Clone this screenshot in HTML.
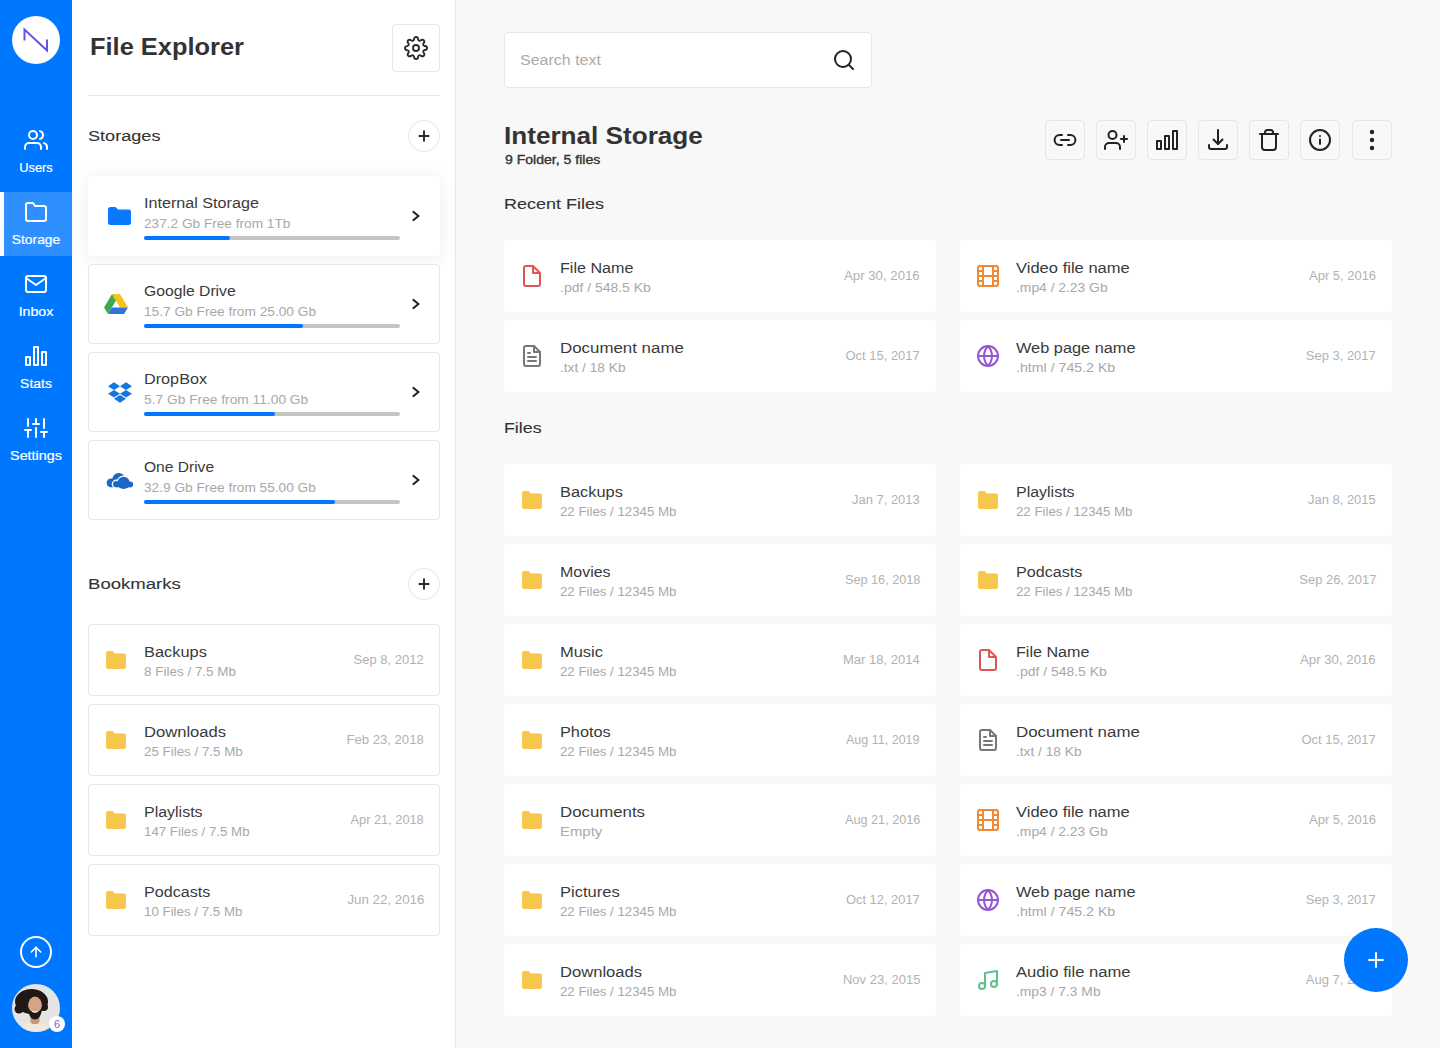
<!DOCTYPE html>
<html><head><meta charset="utf-8"><title>File Explorer</title>
<style>
html,body{margin:0;padding:0;width:1440px;height:1048px;overflow:hidden;background:#F8F8F8;font-family:"Liberation Sans", sans-serif;}
.t{position:absolute;white-space:nowrap;font-family:"Liberation Sans", sans-serif;}
svg{overflow:visible}
</style></head><body>
<div style="position:absolute;left:0px;top:0px;width:72px;height:1048px;box-sizing:border-box;background:#0077FF"></div>
<div style="position:absolute;left:12px;top:16px;width:48px;height:48px;box-sizing:border-box;background:#fff;border-radius:50%"></div>
<svg style="position:absolute;left:12px;top:16px" width="48" height="48" viewBox="0 0 48 48" fill="none" stroke="#6650E6" stroke-width="2" stroke-linejoin="miter" stroke-miterlimit="10"><polyline points="12.5 24.5 12.5 13.5 35 34.5 35 23.5"/></svg>
<svg style="position:absolute;left:24px;top:128px" width="24" height="24" viewBox="0 0 24 24" fill="none" stroke="#fff" stroke-width="2" stroke-linecap="round" stroke-linejoin="round"><path d="M17 21v-2a4 4 0 0 0-4-4H5a4 4 0 0 0-4 4v2"/><circle cx="9" cy="7" r="4"/><path d="M23 21v-2a4 4 0 0 0-3-3.87"/><path d="M16 3.13a4 4 0 0 1 0 7.75"/></svg>
<div id="T0" class="t" style="left:-64px;width:200px;text-align:center;transform-origin:100px 0;top:161.84px;font-size:12px;line-height:12px;color:#fff;font-weight:400;transform:scaleX(1.0645);-webkit-text-stroke:0.2px #fff;">Users</div>
<div style="position:absolute;left:0px;top:192px;width:72px;height:64px;box-sizing:border-box;background:rgba(255,255,255,0.18)"></div>
<div style="position:absolute;left:0px;top:192px;width:4px;height:64px;box-sizing:border-box;background:#fff"></div>
<svg style="position:absolute;left:24px;top:200px" width="24" height="24" viewBox="0 0 24 24" fill="none" stroke="#fff" stroke-width="2" stroke-linecap="round" stroke-linejoin="round"><path d="M22 19a2 2 0 0 1-2 2H4a2 2 0 0 1-2-2V5a2 2 0 0 1 2-2h5l2 3h9a2 2 0 0 1 2 2z"/></svg>
<div id="T1" class="t" style="left:-64px;width:200px;text-align:center;transform-origin:100px 0;top:233.84px;font-size:12px;line-height:12px;color:#fff;font-weight:400;transform:scaleX(1.1513);-webkit-text-stroke:0.2px #fff;">Storage</div>
<svg style="position:absolute;left:24px;top:272px" width="24" height="24" viewBox="0 0 24 24" fill="none" stroke="#fff" stroke-width="2" stroke-linecap="round" stroke-linejoin="round"><path d="M4 4h16c1.1 0 2 .9 2 2v12c0 1.1-.9 2-2 2H4c-1.1 0-2-.9-2-2V6c0-1.1.9-2 2-2z"/><polyline points="22,6 12,13 2,6"/></svg>
<div id="T2" class="t" style="left:-64px;width:200px;text-align:center;transform-origin:100px 0;top:305.84px;font-size:12px;line-height:12px;color:#fff;font-weight:400;transform:scaleX(1.1825);-webkit-text-stroke:0.2px #fff;">Inbox</div>
<svg style="position:absolute;left:24px;top:344px" width="24" height="24" viewBox="0 0 24 24" fill="none" stroke="#fff" stroke-width="2" stroke-linecap="round" stroke-linejoin="round"><rect x="2" y="13" width="4" height="8"/><rect x="10" y="3" width="4" height="18"/><rect x="18" y="8" width="4" height="13"/></svg>
<div id="T3" class="t" style="left:-64px;width:200px;text-align:center;transform-origin:100px 0;top:377.84px;font-size:12px;line-height:12px;color:#fff;font-weight:400;transform:scaleX(1.1612);-webkit-text-stroke:0.2px #fff;">Stats</div>
<svg style="position:absolute;left:24px;top:416px" width="24" height="24" viewBox="0 0 24 24" fill="none" stroke="#fff" stroke-width="2" stroke-linecap="round" stroke-linejoin="round"><line x1="4" y1="21" x2="4" y2="14"/><line x1="4" y1="10" x2="4" y2="3"/><line x1="12" y1="21" x2="12" y2="12"/><line x1="12" y1="8" x2="12" y2="3"/><line x1="20" y1="21" x2="20" y2="16"/><line x1="20" y1="12" x2="20" y2="3"/><line x1="1" y1="14" x2="7" y2="14"/><line x1="9" y1="8" x2="15" y2="8"/><line x1="17" y1="16" x2="23" y2="16"/></svg>
<div id="T4" class="t" style="left:-64px;width:200px;text-align:center;transform-origin:100px 0;top:449.84px;font-size:12px;line-height:12px;color:#fff;font-weight:400;transform:scaleX(1.1950);-webkit-text-stroke:0.2px #fff;">Settings</div>
<div style="position:absolute;left:20px;top:936px;width:32px;height:32px;box-sizing:border-box;border:2px solid #fff;border-radius:50%"></div>
<svg style="position:absolute;left:28px;top:944px" width="16" height="16" viewBox="0 0 24 24" fill="none" stroke="#fff" stroke-width="2.4" stroke-linecap="round" stroke-linejoin="round"><line x1="12" y1="19" x2="12" y2="5"/><polyline points="5 12 12 5 19 12"/></svg>
<svg style="position:absolute;left:12px;top:984px" width="48" height="48" viewBox="0 0 48 48" fill="none">
<defs><clipPath id="av"><circle cx="24" cy="24" r="24"/></clipPath></defs>
<g clip-path="url(#av)">
<rect width="48" height="48" fill="#E6E4E2"/>
<ellipse cx="23" cy="51" rx="17" ry="13" fill="#F1E8E0"/>
<rect x="18.5" y="30" width="9" height="10" rx="3" fill="#C4967A"/>
<ellipse cx="19.5" cy="17.5" rx="16.5" ry="12.5" fill="#1F1815"/><circle cx="7" cy="25" r="4.5" fill="#1F1815"/><circle cx="32" cy="23" r="4" fill="#1F1815"/>
<ellipse cx="23" cy="22" rx="7" ry="9.5" fill="#D3A486"/>
<path d="M15.8 21 C15.8 31 19 35.5 23 35.5 C27 35.5 30.2 31 30.2 21 C29.2 26 27 28.3 23 28.3 C19 28.3 16.8 26 15.8 21Z" fill="#221915"/>
<path d="M20.2 27 Q23 29.2 25.8 27" stroke="#F6F2EF" stroke-width="1.4" fill="none"/>
</g></svg>
<div style="position:absolute;left:49px;top:1016px;width:16px;height:16px;box-sizing:border-box;background:#fff;border-radius:50%"></div>
<div class="t" style="left:49px;width:16px;text-align:center;top:1018.84px;font-size:11px;line-height:11px;color:#7561F0">6</div>
<div style="position:absolute;left:72px;top:0px;width:384px;height:1048px;box-sizing:border-box;background:#fff;border-right:1px solid #E6E6E6"></div>
<div id="T5" class="t" style="left:90px;transform-origin:0 0;top:35.28px;font-size:24px;line-height:24px;color:#333333;font-weight:700;transform:scaleX(1.0592);">File Explorer</div>
<div style="position:absolute;left:392px;top:24px;width:48px;height:48px;box-sizing:border-box;border:1px solid #E6E6E6;border-radius:4px"></div>
<svg style="position:absolute;left:404px;top:36px" width="24" height="24" viewBox="0 0 24 24" fill="none" stroke="#2A2A2A" stroke-width="1.9" stroke-linecap="round" stroke-linejoin="round"><circle cx="12" cy="12" r="3"/><path d="M19.4 15a1.65 1.65 0 0 0 .33 1.82l.06.06a2 2 0 0 1 0 2.830 2 2 0 0 1-2.83 0l-.06-.06a1.65 1.65 0 0 0-1.82-.33 1.65 1.65 0 0 0-1 1.51V21a2 2 0 0 1-2 2 2 2 0 0 1-2-2v-.09A1.65 1.65 0 0 0 9 19.4a1.65 1.65 0 0 0-1.82.33l-.06.06a2 2 0 0 1-2.83 0 2 2 0 0 1 0-2.83l.06-.06a1.65 1.65 0 0 0 .33-1.82 1.65 1.65 0 0 0-1.51-1H3a2 2 0 0 1-2-2 2 2 0 0 1 2-2h.09A1.65 1.65 0 0 0 4.6 9a1.65 1.65 0 0 0-.33-1.82l-.06-.06a2 2 0 0 1 0-2.83 2 2 0 0 1 2.83 0l.06.06a1.65 1.65 0 0 0 1.82.33H9a1.65 1.65 0 0 0 1-1.51V3a2 2 0 0 1 2-2 2 2 0 0 1 2 2v.09a1.65 1.65 0 0 0 1 1.51 1.65 1.65 0 0 0 1.82-.33l.06-.06a2 2 0 0 1 2.83 0 2 2 0 0 1 0 2.83l-.06.06a1.65 1.65 0 0 0-.33 1.82V9a1.65 1.65 0 0 0 1.51 1H21a2 2 0 0 1 2 2 2 2 0 0 1-2 2h-.09a1.65 1.65 0 0 0-1.51 1z"/></svg>
<div style="position:absolute;left:88px;top:95px;width:352px;height:1px;box-sizing:border-box;background:#E6E6E6"></div>
<div id="T6" class="t" style="left:88px;transform-origin:0 0;top:127.88px;font-size:15.5px;line-height:15.5px;color:#333333;font-weight:400;transform:scaleX(1.1680);-webkit-text-stroke:0.1px #333333;">Storages</div>
<div style="position:absolute;left:408px;top:120px;width:32px;height:32px;box-sizing:border-box;border:1px solid #E6E6E6;border-radius:50%"></div>
<svg style="position:absolute;left:416px;top:128px" width="16" height="16" viewBox="0 0 24 24" fill="none" stroke="#262626" stroke-width="2.9" stroke-linecap="round" stroke-linejoin="round"><line x1="12" y1="5" x2="12" y2="19"/><line x1="5" y1="12" x2="19" y2="12"/></svg>
<div style="position:absolute;left:88px;top:176px;width:352px;height:80px;box-sizing:border-box;background:#fff;border-radius:2px;box-shadow:0 2px 20px rgba(0,0,0,0.075)"></div>
<svg style="position:absolute;left:108px;top:207px" width="23" height="18" viewBox="0 0 23 18" fill="none"><path d="M0 2.5A2.5 2.5 0 0 1 2.5 0H7.5L10 2.5H20.5A2.5 2.5 0 0 1 23 5V15.5A2.5 2.5 0 0 1 20.5 18H2.5A2.5 2.5 0 0 1 0 15.5Z" fill="#0A78FF"/></svg>
<div id="T7" class="t" style="left:144px;transform-origin:0 0;top:196.15px;font-size:14px;line-height:14px;color:#3A3A3A;font-weight:400;transform:scaleX(1.1532);">Internal Storage</div>
<div id="T8" class="t" style="left:144px;transform-origin:0 0;top:217.84px;font-size:12px;line-height:12px;color:#A8A8A8;font-weight:400;transform:scaleX(1.1367);">237.2 Gb Free from 1Tb</div>
<div style="position:absolute;left:144px;top:236px;width:256px;height:4px;box-sizing:border-box;background:#C4C4C4;border-radius:2px"></div>
<div style="position:absolute;left:144px;top:236px;width:86px;height:4px;box-sizing:border-box;background:#0077FF;border-radius:2px"></div>
<svg style="position:absolute;left:410px;top:210px" width="12" height="12" viewBox="0 0 12 12" fill="none" stroke="#222" stroke-width="2.2" stroke-linecap="round" stroke-linejoin="round"><polyline points="3.5 2 8.5 6 3.5 10"/></svg>
<div style="position:absolute;left:88px;top:264px;width:352px;height:80px;box-sizing:border-box;background:#fff;border:1px solid #E6E6E6;border-radius:4px"></div>
<svg style="position:absolute;left:104px;top:294px" width="24" height="20" viewBox="0 0 24 20" fill="none"><polygon points="8,0 0,13.6 4,20 12,6.6" fill="#3EA94F"/><polygon points="8,0 16,0 24,13.6 16,13.6" fill="#F9C11B"/><polygon points="8,13.6 24,13.6 20,20 4,20" fill="#3073DA"/></svg>
<div id="T9" class="t" style="left:144px;transform-origin:0 0;top:284.15px;font-size:14px;line-height:14px;color:#3A3A3A;font-weight:400;transform:scaleX(1.1225);">Google Drive</div>
<div id="T10" class="t" style="left:144px;transform-origin:0 0;top:305.84px;font-size:12px;line-height:12px;color:#A8A8A8;font-weight:400;transform:scaleX(1.1410);">15.7 Gb Free from 25.00 Gb</div>
<div style="position:absolute;left:144px;top:324px;width:256px;height:4px;box-sizing:border-box;background:#C4C4C4;border-radius:2px"></div>
<div style="position:absolute;left:144px;top:324px;width:159px;height:4px;box-sizing:border-box;background:#0077FF;border-radius:2px"></div>
<svg style="position:absolute;left:410px;top:298px" width="12" height="12" viewBox="0 0 12 12" fill="none" stroke="#222" stroke-width="2.2" stroke-linecap="round" stroke-linejoin="round"><polyline points="3.5 2 8.5 6 3.5 10"/></svg>
<div style="position:absolute;left:88px;top:352px;width:352px;height:80px;box-sizing:border-box;background:#fff;border:1px solid #E6E6E6;border-radius:4px"></div>
<svg style="position:absolute;left:108px;top:381px" width="24" height="22" viewBox="0 0.5 24 22" fill="none"><path d="M6 1.807L0 5.629l6 3.822 6.001-3.822L6 1.807zM18 1.807l-6 3.822 6 3.822 6-3.822-6-3.822zM0 13.274l6 3.822 6.001-3.822L6 9.452l-6 3.822zM18 9.452l-6 3.822 6 3.822 6-3.822-6-3.822zM6 18.371l6.001 3.822 6-3.822-6-3.822L6 18.371z" fill="#1575E0"/></svg>
<div id="T11" class="t" style="left:144px;transform-origin:0 0;top:372.15px;font-size:14px;line-height:14px;color:#3A3A3A;font-weight:400;transform:scaleX(1.1578);">DropBox</div>
<div id="T12" class="t" style="left:144px;transform-origin:0 0;top:393.84px;font-size:12px;line-height:12px;color:#A8A8A8;font-weight:400;transform:scaleX(1.1469);">5.7 Gb Free from 11.00 Gb</div>
<div style="position:absolute;left:144px;top:412px;width:256px;height:4px;box-sizing:border-box;background:#C4C4C4;border-radius:2px"></div>
<div style="position:absolute;left:144px;top:412px;width:131px;height:4px;box-sizing:border-box;background:#0077FF;border-radius:2px"></div>
<svg style="position:absolute;left:410px;top:386px" width="12" height="12" viewBox="0 0 12 12" fill="none" stroke="#222" stroke-width="2.2" stroke-linecap="round" stroke-linejoin="round"><polyline points="3.5 2 8.5 6 3.5 10"/></svg>
<div style="position:absolute;left:88px;top:440px;width:352px;height:80px;box-sizing:border-box;background:#fff;border:1px solid #E6E6E6;border-radius:4px"></div>
<svg style="position:absolute;left:106px;top:473px" width="28" height="15" viewBox="0 0 28 15" fill="none"><g fill="#1B66C9"><circle cx="5" cy="9.8" r="4.4"/><circle cx="12.8" cy="6.6" r="6.6"/><rect x="5" y="8" width="10" height="6.2"/></g><g fill="#fff" stroke="#fff" stroke-width="2.6"><circle cx="17.6" cy="9.9" r="6.1"/><circle cx="10.2" cy="11.1" r="3.2"/><circle cx="24.2" cy="11.4" r="2.9"/><rect x="10.2" y="10" width="14" height="4.3"/></g><g fill="#1B66C9"><circle cx="17.6" cy="9.9" r="6.1"/><circle cx="10.2" cy="11.1" r="3.2"/><circle cx="24.2" cy="11.4" r="2.9"/><rect x="10.2" y="10" width="14" height="4.3"/></g></svg>
<div id="T13" class="t" style="left:144px;transform-origin:0 0;top:460.15px;font-size:14px;line-height:14px;color:#3A3A3A;font-weight:400;transform:scaleX(1.1115);">One Drive</div>
<div id="T14" class="t" style="left:144px;transform-origin:0 0;top:481.84px;font-size:12px;line-height:12px;color:#A8A8A8;font-weight:400;transform:scaleX(1.1401);">32.9 Gb Free from 55.00 Gb</div>
<div style="position:absolute;left:144px;top:500px;width:256px;height:4px;box-sizing:border-box;background:#C4C4C4;border-radius:2px"></div>
<div style="position:absolute;left:144px;top:500px;width:191px;height:4px;box-sizing:border-box;background:#0077FF;border-radius:2px"></div>
<svg style="position:absolute;left:410px;top:474px" width="12" height="12" viewBox="0 0 12 12" fill="none" stroke="#222" stroke-width="2.2" stroke-linecap="round" stroke-linejoin="round"><polyline points="3.5 2 8.5 6 3.5 10"/></svg>
<div id="T15" class="t" style="left:88px;transform-origin:0 0;top:575.68px;font-size:15.5px;line-height:15.5px;color:#333333;font-weight:400;transform:scaleX(1.1980);-webkit-text-stroke:0.1px #333333;">Bookmarks</div>
<div style="position:absolute;left:408px;top:568px;width:32px;height:32px;box-sizing:border-box;border:1px solid #E6E6E6;border-radius:50%"></div>
<svg style="position:absolute;left:416px;top:576px" width="16" height="16" viewBox="0 0 24 24" fill="none" stroke="#262626" stroke-width="2.9" stroke-linecap="round" stroke-linejoin="round"><line x1="12" y1="5" x2="12" y2="19"/><line x1="5" y1="12" x2="19" y2="12"/></svg>
<div style="position:absolute;left:88px;top:624px;width:352px;height:72px;box-sizing:border-box;background:#fff;border:1px solid #E6E6E6;border-radius:4px"></div>
<svg style="position:absolute;left:106px;top:651px" width="20" height="18" viewBox="0 0 20 18" fill="none"><path d="M0 2A2 2 0 0 1 2 0H6.5L9 2.5H18A2 2 0 0 1 20 4.5V16A2 2 0 0 1 18 18H2A2 2 0 0 1 0 16Z" fill="#F5C84C"/></svg>
<div id="T16" class="t" style="left:144px;transform-origin:0 0;top:645.15px;font-size:14px;line-height:14px;color:#3A3A3A;font-weight:400;transform:scaleX(1.1698);">Backups</div>
<div id="T17" class="t" style="left:144px;transform-origin:0 0;top:665.84px;font-size:12px;line-height:12px;color:#A8A8A8;font-weight:400;transform:scaleX(1.1220);">8 Files / 7.5 Mb</div>
<div id="T18" class="t" style="right:1016px;transform-origin:100% 0;top:653.84px;font-size:12px;line-height:12px;color:#B2B2B2;font-weight:400;transform:scaleX(1.0859);">Sep 8, 2012</div>
<div style="position:absolute;left:88px;top:704px;width:352px;height:72px;box-sizing:border-box;background:#fff;border:1px solid #E6E6E6;border-radius:4px"></div>
<svg style="position:absolute;left:106px;top:731px" width="20" height="18" viewBox="0 0 20 18" fill="none"><path d="M0 2A2 2 0 0 1 2 0H6.5L9 2.5H18A2 2 0 0 1 20 4.5V16A2 2 0 0 1 18 18H2A2 2 0 0 1 0 16Z" fill="#F5C84C"/></svg>
<div id="T19" class="t" style="left:144px;transform-origin:0 0;top:725.15px;font-size:14px;line-height:14px;color:#3A3A3A;font-weight:400;transform:scaleX(1.1845);">Downloads</div>
<div id="T20" class="t" style="left:144px;transform-origin:0 0;top:745.84px;font-size:12px;line-height:12px;color:#A8A8A8;font-weight:400;transform:scaleX(1.1134);">25 Files / 7.5 Mb</div>
<div id="T21" class="t" style="right:1016px;transform-origin:100% 0;top:733.84px;font-size:12px;line-height:12px;color:#B2B2B2;font-weight:400;transform:scaleX(1.0933);">Feb 23, 2018</div>
<div style="position:absolute;left:88px;top:784px;width:352px;height:72px;box-sizing:border-box;background:#fff;border:1px solid #E6E6E6;border-radius:4px"></div>
<svg style="position:absolute;left:106px;top:811px" width="20" height="18" viewBox="0 0 20 18" fill="none"><path d="M0 2A2 2 0 0 1 2 0H6.5L9 2.5H18A2 2 0 0 1 20 4.5V16A2 2 0 0 1 18 18H2A2 2 0 0 1 0 16Z" fill="#F5C84C"/></svg>
<div id="T22" class="t" style="left:144px;transform-origin:0 0;top:805.15px;font-size:14px;line-height:14px;color:#3A3A3A;font-weight:400;transform:scaleX(1.1409);">Playlists</div>
<div id="T23" class="t" style="left:144px;transform-origin:0 0;top:825.84px;font-size:12px;line-height:12px;color:#A8A8A8;font-weight:400;transform:scaleX(1.1064);">147 Files / 7.5 Mb</div>
<div id="T24" class="t" style="right:1016px;transform-origin:100% 0;top:813.84px;font-size:12px;line-height:12px;color:#B2B2B2;font-weight:400;transform:scaleX(1.0657);">Apr 21, 2018</div>
<div style="position:absolute;left:88px;top:864px;width:352px;height:72px;box-sizing:border-box;background:#fff;border:1px solid #E6E6E6;border-radius:4px"></div>
<svg style="position:absolute;left:106px;top:891px" width="20" height="18" viewBox="0 0 20 18" fill="none"><path d="M0 2A2 2 0 0 1 2 0H6.5L9 2.5H18A2 2 0 0 1 20 4.5V16A2 2 0 0 1 18 18H2A2 2 0 0 1 0 16Z" fill="#F5C84C"/></svg>
<div id="T25" class="t" style="left:144px;transform-origin:0 0;top:885.15px;font-size:14px;line-height:14px;color:#3A3A3A;font-weight:400;transform:scaleX(1.1494);">Podcasts</div>
<div id="T26" class="t" style="left:144px;transform-origin:0 0;top:905.84px;font-size:12px;line-height:12px;color:#A8A8A8;font-weight:400;transform:scaleX(1.1093);">10 Files / 7.5 Mb</div>
<div id="T27" class="t" style="right:1016px;transform-origin:100% 0;top:893.84px;font-size:12px;line-height:12px;color:#B2B2B2;font-weight:400;transform:scaleX(1.1092);">Jun 22, 2016</div>
<div style="position:absolute;left:456px;top:0px;width:984px;height:1048px;box-sizing:border-box;background:#F8F8F8"></div>
<div style="position:absolute;left:504px;top:32px;width:368px;height:56px;box-sizing:border-box;background:#fff;border:1px solid #E6E6E6;border-radius:4px"></div>
<div id="T28" class="t" style="left:520px;transform-origin:0 0;top:52.95px;font-size:14px;line-height:14px;color:#ABABAB;font-weight:400;transform:scaleX(1.1431);">Search text</div>
<svg style="position:absolute;left:832px;top:48px" width="24" height="24" viewBox="0 0 24 24" fill="none" stroke="#222" stroke-width="2" stroke-linecap="round" stroke-linejoin="round"><circle cx="11" cy="11" r="8"/><line x1="21" y1="21" x2="16.65" y2="16.65"/></svg>
<div id="T29" class="t" style="left:504px;transform-origin:0 0;top:123.68px;font-size:24px;line-height:24px;color:#333333;font-weight:700;transform:scaleX(1.0884);">Internal Storage</div>
<div id="T30" class="t" style="left:505px;transform-origin:0 0;top:153.84px;font-size:12px;line-height:12px;color:#333333;font-weight:400;transform:scaleX(1.1708);-webkit-text-stroke:0.35px #333333;">9 Folder, 5 files</div>
<div style="position:absolute;left:1045px;top:120px;width:40px;height:40px;box-sizing:border-box;border:1px solid #E6E6E6;border-radius:4px"></div>
<svg style="position:absolute;left:1053px;top:128px" width="24" height="24" viewBox="0 0 24 24" fill="none" stroke="#222" stroke-width="2" stroke-linecap="round" stroke-linejoin="round"><path d="M9 17H6.6A5 5 0 0 1 6.6 7H9"/><path d="M15 7h2.4a5 5 0 0 1 0 10H15"/><line x1="8" y1="12" x2="16" y2="12"/></svg>
<div style="position:absolute;left:1096px;top:120px;width:40px;height:40px;box-sizing:border-box;border:1px solid #E6E6E6;border-radius:4px"></div>
<svg style="position:absolute;left:1104px;top:128px" width="24" height="24" viewBox="0 0 24 24" fill="none" stroke="#222" stroke-width="2" stroke-linecap="round" stroke-linejoin="round"><path d="M16 21v-2a4 4 0 0 0-4-4H5a4 4 0 0 0-4 4v2"/><circle cx="8.5" cy="7" r="4"/><line x1="20" y1="8" x2="20" y2="14"/><line x1="23" y1="11" x2="17" y2="11"/></svg>
<div style="position:absolute;left:1147px;top:120px;width:40px;height:40px;box-sizing:border-box;border:1px solid #E6E6E6;border-radius:4px"></div>
<svg style="position:absolute;left:1155px;top:128px" width="24" height="24" viewBox="0 0 24 24" fill="none" stroke="#222" stroke-width="2" stroke-linecap="round" stroke-linejoin="round"><rect x="2" y="13" width="4" height="8"/><rect x="10" y="8" width="4" height="13"/><rect x="18" y="3" width="4" height="18"/></svg>
<div style="position:absolute;left:1198px;top:120px;width:40px;height:40px;box-sizing:border-box;border:1px solid #E6E6E6;border-radius:4px"></div>
<svg style="position:absolute;left:1206px;top:128px" width="24" height="24" viewBox="0 0 24 24" fill="none" stroke="#222" stroke-width="2" stroke-linecap="round" stroke-linejoin="round"><path d="M3 17v2a2 2 0 0 0 2 2h14a2 2 0 0 0 2-2v-2"/><polyline points="7.5 11.5 12 16 16.5 11.5"/><line x1="12" y1="16" x2="12" y2="2"/></svg>
<div style="position:absolute;left:1249px;top:120px;width:40px;height:40px;box-sizing:border-box;border:1px solid #E6E6E6;border-radius:4px"></div>
<svg style="position:absolute;left:1257px;top:128px" width="24" height="24" viewBox="0 0 24 24" fill="none" stroke="#222" stroke-width="2" stroke-linecap="round" stroke-linejoin="round"><line x1="3" y1="6" x2="21" y2="6"/><path d="M8 6V4.5A2.5 2.5 0 0 1 10.5 2h3A2.5 2.5 0 0 1 16 4.5V6"/><path d="M5 6v13a3 3 0 0 0 3 3h8a3 3 0 0 0 3-3V6"/></svg>
<div style="position:absolute;left:1300px;top:120px;width:40px;height:40px;box-sizing:border-box;border:1px solid #E6E6E6;border-radius:4px"></div>
<svg style="position:absolute;left:1308px;top:128px" width="24" height="24" viewBox="0 0 24 24" fill="none" stroke="#222" stroke-width="2" stroke-linecap="round" stroke-linejoin="round"><circle cx="12" cy="12" r="10"/><line x1="12" y1="16" x2="12" y2="11.5"/><line x1="12" y1="8" x2="12.01" y2="8"/></svg>
<div style="position:absolute;left:1352px;top:120px;width:40px;height:40px;box-sizing:border-box;border:1px solid #E6E6E6;border-radius:4px"></div>
<svg style="position:absolute;left:1360px;top:128px" width="24" height="24" viewBox="0 0 24 24" fill="none" stroke="#222" stroke-width="2" stroke-linecap="round" stroke-linejoin="round"><circle cx="12" cy="4" r="1.2"/><circle cx="12" cy="12" r="1.2"/><circle cx="12" cy="20" r="1.2"/></svg>
<div id="T31" class="t" style="left:504px;transform-origin:0 0;top:195.68px;font-size:15.5px;line-height:15.5px;color:#333333;font-weight:400;transform:scaleX(1.1604);-webkit-text-stroke:0.1px #333333;">Recent Files</div>
<div style="position:absolute;left:504px;top:240px;width:432px;height:72px;box-sizing:border-box;background:#fff;border-radius:1px"></div>
<svg style="position:absolute;left:520px;top:264px" width="24" height="24" viewBox="0 0 24 24" fill="none" stroke="#DD5656" stroke-width="2" stroke-linecap="round" stroke-linejoin="round"><path d="M13 2H6a2 2 0 0 0-2 2v16a2 2 0 0 0 2 2h12a2 2 0 0 0 2-2V9z"/><polyline points="13 2 13 9 20 9"/></svg>
<div id="T32" class="t" style="left:560px;transform-origin:0 0;top:261.15px;font-size:14px;line-height:14px;color:#3A3A3A;font-weight:400;transform:scaleX(1.1512);">File Name</div>
<div id="T33" class="t" style="left:560px;transform-origin:0 0;top:281.84px;font-size:12px;line-height:12px;color:#A8A8A8;font-weight:400;transform:scaleX(1.1623);">.pdf / 548.5 Kb</div>
<div id="T34" class="t" style="right:520px;transform-origin:100% 0;top:269.84px;font-size:12px;line-height:12px;color:#B2B2B2;font-weight:400;transform:scaleX(1.1019);">Apr 30, 2016</div>
<div style="position:absolute;left:960px;top:240px;width:432px;height:72px;box-sizing:border-box;background:#fff;border-radius:1px"></div>
<svg style="position:absolute;left:976px;top:264px" width="24" height="24" viewBox="0 0 24 24" fill="none" stroke="#EE8A35" stroke-width="2" stroke-linecap="round" stroke-linejoin="round"><rect x="2" y="2" width="20" height="20" rx="2.18" ry="2.18"/><line x1="7" y1="2" x2="7" y2="22"/><line x1="17" y1="2" x2="17" y2="22"/><line x1="2" y1="12" x2="22" y2="12"/><line x1="2" y1="7" x2="7" y2="7"/><line x1="2" y1="17" x2="7" y2="17"/><line x1="17" y1="17" x2="22" y2="17"/><line x1="17" y1="7" x2="22" y2="7"/></svg>
<div id="T35" class="t" style="left:1016px;transform-origin:0 0;top:261.15px;font-size:14px;line-height:14px;color:#3A3A3A;font-weight:400;transform:scaleX(1.1823);">Video file name</div>
<div id="T36" class="t" style="left:1016px;transform-origin:0 0;top:281.84px;font-size:12px;line-height:12px;color:#A8A8A8;font-weight:400;transform:scaleX(1.1539);">.mp4 / 2.23 Gb</div>
<div id="T37" class="t" style="right:64px;transform-origin:100% 0;top:269.84px;font-size:12px;line-height:12px;color:#B2B2B2;font-weight:400;transform:scaleX(1.0798);">Apr 5, 2016</div>
<div style="position:absolute;left:504px;top:320px;width:432px;height:72px;box-sizing:border-box;background:#fff;border-radius:1px"></div>
<svg style="position:absolute;left:520px;top:344px" width="24" height="24" viewBox="0 0 24 24" fill="none" stroke="#777" stroke-width="2" stroke-linecap="round" stroke-linejoin="round"><path d="M14 2H6a2 2 0 0 0-2 2v16a2 2 0 0 0 2 2h12a2 2 0 0 0 2-2V8z"/><polyline points="14 2 14 8 20 8"/><line x1="16" y1="13" x2="8" y2="13"/><line x1="16" y1="17" x2="8" y2="17"/><polyline points="10 9 9 9 8 9"/></svg>
<div id="T38" class="t" style="left:560px;transform-origin:0 0;top:341.15px;font-size:14px;line-height:14px;color:#3A3A3A;font-weight:400;transform:scaleX(1.2056);">Document name</div>
<div id="T39" class="t" style="left:560px;transform-origin:0 0;top:361.84px;font-size:12px;line-height:12px;color:#A8A8A8;font-weight:400;transform:scaleX(1.1429);">.txt / 18 Kb</div>
<div id="T40" class="t" style="right:520px;transform-origin:100% 0;top:349.84px;font-size:12px;line-height:12px;color:#B2B2B2;font-weight:400;transform:scaleX(1.0798);">Oct 15, 2017</div>
<div style="position:absolute;left:960px;top:320px;width:432px;height:72px;box-sizing:border-box;background:#fff;border-radius:1px"></div>
<svg style="position:absolute;left:976px;top:344px" width="24" height="24" viewBox="0 0 24 24" fill="none" stroke="#9556D6" stroke-width="2" stroke-linecap="round" stroke-linejoin="round"><circle cx="12" cy="12" r="10"/><line x1="2" y1="12" x2="22" y2="12"/><path d="M12 2a15.3 15.3 0 0 1 4 10 15.3 15.3 0 0 1-4 10 15.3 15.3 0 0 1-4-10 15.3 15.3 0 0 1 4-10z"/></svg>
<div id="T41" class="t" style="left:1016px;transform-origin:0 0;top:341.15px;font-size:14px;line-height:14px;color:#3A3A3A;font-weight:400;transform:scaleX(1.1664);">Web page name</div>
<div id="T42" class="t" style="left:1016px;transform-origin:0 0;top:361.84px;font-size:12px;line-height:12px;color:#A8A8A8;font-weight:400;transform:scaleX(1.1807);">.html / 745.2 Kb</div>
<div id="T43" class="t" style="right:64px;transform-origin:100% 0;top:349.84px;font-size:12px;line-height:12px;color:#B2B2B2;font-weight:400;transform:scaleX(1.0798);">Sep 3, 2017</div>
<div id="T44" class="t" style="left:504px;transform-origin:0 0;top:419.88px;font-size:15.5px;line-height:15.5px;color:#333333;font-weight:400;transform:scaleX(1.1483);-webkit-text-stroke:0.1px #333333;">Files</div>
<div style="position:absolute;left:504px;top:464px;width:432px;height:72px;box-sizing:border-box;background:#fff;border-radius:1px"></div>
<svg style="position:absolute;left:522px;top:491px" width="20" height="18" viewBox="0 0 20 18" fill="none"><path d="M0 2A2 2 0 0 1 2 0H6.5L9 2.5H18A2 2 0 0 1 20 4.5V16A2 2 0 0 1 18 18H2A2 2 0 0 1 0 16Z" fill="#F5C84C"/></svg>
<div id="T45" class="t" style="left:560px;transform-origin:0 0;top:485.15px;font-size:14px;line-height:14px;color:#3A3A3A;font-weight:400;transform:scaleX(1.1698);">Backups</div>
<div id="T46" class="t" style="left:560px;transform-origin:0 0;top:505.84px;font-size:12px;line-height:12px;color:#A8A8A8;font-weight:400;transform:scaleX(1.1048);">22 Files / 12345 Mb</div>
<div id="T47" class="t" style="right:520px;transform-origin:100% 0;top:493.84px;font-size:12px;line-height:12px;color:#B2B2B2;font-weight:400;transform:scaleX(1.0803);">Jan 7, 2013</div>
<div style="position:absolute;left:504px;top:544px;width:432px;height:72px;box-sizing:border-box;background:#fff;border-radius:1px"></div>
<svg style="position:absolute;left:522px;top:571px" width="20" height="18" viewBox="0 0 20 18" fill="none"><path d="M0 2A2 2 0 0 1 2 0H6.5L9 2.5H18A2 2 0 0 1 20 4.5V16A2 2 0 0 1 18 18H2A2 2 0 0 1 0 16Z" fill="#F5C84C"/></svg>
<div id="T48" class="t" style="left:560px;transform-origin:0 0;top:565.15px;font-size:14px;line-height:14px;color:#3A3A3A;font-weight:400;transform:scaleX(1.1395);">Movies</div>
<div id="T49" class="t" style="left:560px;transform-origin:0 0;top:585.84px;font-size:12px;line-height:12px;color:#A8A8A8;font-weight:400;transform:scaleX(1.1048);">22 Files / 12345 Mb</div>
<div id="T50" class="t" style="right:520px;transform-origin:100% 0;top:573.84px;font-size:12px;line-height:12px;color:#B2B2B2;font-weight:400;transform:scaleX(1.0566);">Sep 16, 2018</div>
<div style="position:absolute;left:504px;top:624px;width:432px;height:72px;box-sizing:border-box;background:#fff;border-radius:1px"></div>
<svg style="position:absolute;left:522px;top:651px" width="20" height="18" viewBox="0 0 20 18" fill="none"><path d="M0 2A2 2 0 0 1 2 0H6.5L9 2.5H18A2 2 0 0 1 20 4.5V16A2 2 0 0 1 18 18H2A2 2 0 0 1 0 16Z" fill="#F5C84C"/></svg>
<div id="T51" class="t" style="left:560px;transform-origin:0 0;top:645.15px;font-size:14px;line-height:14px;color:#3A3A3A;font-weight:400;transform:scaleX(1.1727);">Music</div>
<div id="T52" class="t" style="left:560px;transform-origin:0 0;top:665.84px;font-size:12px;line-height:12px;color:#A8A8A8;font-weight:400;transform:scaleX(1.1048);">22 Files / 12345 Mb</div>
<div id="T53" class="t" style="right:520px;transform-origin:100% 0;top:653.84px;font-size:12px;line-height:12px;color:#B2B2B2;font-weight:400;transform:scaleX(1.0861);">Mar 18, 2014</div>
<div style="position:absolute;left:504px;top:704px;width:432px;height:72px;box-sizing:border-box;background:#fff;border-radius:1px"></div>
<svg style="position:absolute;left:522px;top:731px" width="20" height="18" viewBox="0 0 20 18" fill="none"><path d="M0 2A2 2 0 0 1 2 0H6.5L9 2.5H18A2 2 0 0 1 20 4.5V16A2 2 0 0 1 18 18H2A2 2 0 0 1 0 16Z" fill="#F5C84C"/></svg>
<div id="T54" class="t" style="left:560px;transform-origin:0 0;top:725.15px;font-size:14px;line-height:14px;color:#3A3A3A;font-weight:400;transform:scaleX(1.1628);">Photos</div>
<div id="T55" class="t" style="left:560px;transform-origin:0 0;top:745.84px;font-size:12px;line-height:12px;color:#A8A8A8;font-weight:400;transform:scaleX(1.1048);">22 Files / 12345 Mb</div>
<div id="T56" class="t" style="right:520px;transform-origin:100% 0;top:733.84px;font-size:12px;line-height:12px;color:#B2B2B2;font-weight:400;transform:scaleX(1.0427);">Aug 11, 2019</div>
<div style="position:absolute;left:504px;top:784px;width:432px;height:72px;box-sizing:border-box;background:#fff;border-radius:1px"></div>
<svg style="position:absolute;left:522px;top:811px" width="20" height="18" viewBox="0 0 20 18" fill="none"><path d="M0 2A2 2 0 0 1 2 0H6.5L9 2.5H18A2 2 0 0 1 20 4.5V16A2 2 0 0 1 18 18H2A2 2 0 0 1 0 16Z" fill="#F5C84C"/></svg>
<div id="T57" class="t" style="left:560px;transform-origin:0 0;top:805.15px;font-size:14px;line-height:14px;color:#3A3A3A;font-weight:400;transform:scaleX(1.2000);">Documents</div>
<div id="T58" class="t" style="left:560px;transform-origin:0 0;top:825.84px;font-size:12px;line-height:12px;color:#A8A8A8;font-weight:400;transform:scaleX(1.2424);">Empty</div>
<div id="T59" class="t" style="right:520px;transform-origin:100% 0;top:813.84px;font-size:12px;line-height:12px;color:#B2B2B2;font-weight:400;transform:scaleX(1.0558);">Aug 21, 2016</div>
<div style="position:absolute;left:504px;top:864px;width:432px;height:72px;box-sizing:border-box;background:#fff;border-radius:1px"></div>
<svg style="position:absolute;left:522px;top:891px" width="20" height="18" viewBox="0 0 20 18" fill="none"><path d="M0 2A2 2 0 0 1 2 0H6.5L9 2.5H18A2 2 0 0 1 20 4.5V16A2 2 0 0 1 18 18H2A2 2 0 0 1 0 16Z" fill="#F5C84C"/></svg>
<div id="T60" class="t" style="left:560px;transform-origin:0 0;top:885.15px;font-size:14px;line-height:14px;color:#3A3A3A;font-weight:400;transform:scaleX(1.1803);">Pictures</div>
<div id="T61" class="t" style="left:560px;transform-origin:0 0;top:905.84px;font-size:12px;line-height:12px;color:#A8A8A8;font-weight:400;transform:scaleX(1.1048);">22 Files / 12345 Mb</div>
<div id="T62" class="t" style="right:520px;transform-origin:100% 0;top:893.84px;font-size:12px;line-height:12px;color:#B2B2B2;font-weight:400;transform:scaleX(1.0738);">Oct 12, 2017</div>
<div style="position:absolute;left:504px;top:944px;width:432px;height:72px;box-sizing:border-box;background:#fff;border-radius:1px"></div>
<svg style="position:absolute;left:522px;top:971px" width="20" height="18" viewBox="0 0 20 18" fill="none"><path d="M0 2A2 2 0 0 1 2 0H6.5L9 2.5H18A2 2 0 0 1 20 4.5V16A2 2 0 0 1 18 18H2A2 2 0 0 1 0 16Z" fill="#F5C84C"/></svg>
<div id="T63" class="t" style="left:560px;transform-origin:0 0;top:965.15px;font-size:14px;line-height:14px;color:#3A3A3A;font-weight:400;transform:scaleX(1.1845);">Downloads</div>
<div id="T64" class="t" style="left:560px;transform-origin:0 0;top:985.84px;font-size:12px;line-height:12px;color:#A8A8A8;font-weight:400;transform:scaleX(1.1048);">22 Files / 12345 Mb</div>
<div id="T65" class="t" style="right:520px;transform-origin:100% 0;top:973.84px;font-size:12px;line-height:12px;color:#B2B2B2;font-weight:400;transform:scaleX(1.0847);">Nov 23, 2015</div>
<div style="position:absolute;left:960px;top:464px;width:432px;height:72px;box-sizing:border-box;background:#fff;border-radius:1px"></div>
<svg style="position:absolute;left:978px;top:491px" width="20" height="18" viewBox="0 0 20 18" fill="none"><path d="M0 2A2 2 0 0 1 2 0H6.5L9 2.5H18A2 2 0 0 1 20 4.5V16A2 2 0 0 1 18 18H2A2 2 0 0 1 0 16Z" fill="#F5C84C"/></svg>
<div id="T66" class="t" style="left:1016px;transform-origin:0 0;top:485.15px;font-size:14px;line-height:14px;color:#3A3A3A;font-weight:400;transform:scaleX(1.1409);">Playlists</div>
<div id="T67" class="t" style="left:1016px;transform-origin:0 0;top:505.84px;font-size:12px;line-height:12px;color:#A8A8A8;font-weight:400;transform:scaleX(1.1048);">22 Files / 12345 Mb</div>
<div id="T68" class="t" style="right:64px;transform-origin:100% 0;top:493.84px;font-size:12px;line-height:12px;color:#B2B2B2;font-weight:400;transform:scaleX(1.0798);">Jan 8, 2015</div>
<div style="position:absolute;left:960px;top:544px;width:432px;height:72px;box-sizing:border-box;background:#fff;border-radius:1px"></div>
<svg style="position:absolute;left:978px;top:571px" width="20" height="18" viewBox="0 0 20 18" fill="none"><path d="M0 2A2 2 0 0 1 2 0H6.5L9 2.5H18A2 2 0 0 1 20 4.5V16A2 2 0 0 1 18 18H2A2 2 0 0 1 0 16Z" fill="#F5C84C"/></svg>
<div id="T69" class="t" style="left:1016px;transform-origin:0 0;top:565.15px;font-size:14px;line-height:14px;color:#3A3A3A;font-weight:400;transform:scaleX(1.1494);">Podcasts</div>
<div id="T70" class="t" style="left:1016px;transform-origin:0 0;top:585.84px;font-size:12px;line-height:12px;color:#A8A8A8;font-weight:400;transform:scaleX(1.1048);">22 Files / 12345 Mb</div>
<div id="T71" class="t" style="right:64px;transform-origin:100% 0;top:573.84px;font-size:12px;line-height:12px;color:#B2B2B2;font-weight:400;transform:scaleX(1.0798);">Sep 26, 2017</div>
<div style="position:absolute;left:960px;top:624px;width:432px;height:72px;box-sizing:border-box;background:#fff;border-radius:1px"></div>
<svg style="position:absolute;left:976px;top:648px" width="24" height="24" viewBox="0 0 24 24" fill="none" stroke="#DD5656" stroke-width="2" stroke-linecap="round" stroke-linejoin="round"><path d="M13 2H6a2 2 0 0 0-2 2v16a2 2 0 0 0 2 2h12a2 2 0 0 0 2-2V9z"/><polyline points="13 2 13 9 20 9"/></svg>
<div id="T72" class="t" style="left:1016px;transform-origin:0 0;top:645.15px;font-size:14px;line-height:14px;color:#3A3A3A;font-weight:400;transform:scaleX(1.1512);">File Name</div>
<div id="T73" class="t" style="left:1016px;transform-origin:0 0;top:665.84px;font-size:12px;line-height:12px;color:#A8A8A8;font-weight:400;transform:scaleX(1.1623);">.pdf / 548.5 Kb</div>
<div id="T74" class="t" style="right:64px;transform-origin:100% 0;top:653.84px;font-size:12px;line-height:12px;color:#B2B2B2;font-weight:400;transform:scaleX(1.1019);">Apr 30, 2016</div>
<div style="position:absolute;left:960px;top:704px;width:432px;height:72px;box-sizing:border-box;background:#fff;border-radius:1px"></div>
<svg style="position:absolute;left:976px;top:728px" width="24" height="24" viewBox="0 0 24 24" fill="none" stroke="#777" stroke-width="2" stroke-linecap="round" stroke-linejoin="round"><path d="M14 2H6a2 2 0 0 0-2 2v16a2 2 0 0 0 2 2h12a2 2 0 0 0 2-2V8z"/><polyline points="14 2 14 8 20 8"/><line x1="16" y1="13" x2="8" y2="13"/><line x1="16" y1="17" x2="8" y2="17"/><polyline points="10 9 9 9 8 9"/></svg>
<div id="T75" class="t" style="left:1016px;transform-origin:0 0;top:725.15px;font-size:14px;line-height:14px;color:#3A3A3A;font-weight:400;transform:scaleX(1.2056);">Document name</div>
<div id="T76" class="t" style="left:1016px;transform-origin:0 0;top:745.84px;font-size:12px;line-height:12px;color:#A8A8A8;font-weight:400;transform:scaleX(1.1429);">.txt / 18 Kb</div>
<div id="T77" class="t" style="right:64px;transform-origin:100% 0;top:733.84px;font-size:12px;line-height:12px;color:#B2B2B2;font-weight:400;transform:scaleX(1.0798);">Oct 15, 2017</div>
<div style="position:absolute;left:960px;top:784px;width:432px;height:72px;box-sizing:border-box;background:#fff;border-radius:1px"></div>
<svg style="position:absolute;left:976px;top:808px" width="24" height="24" viewBox="0 0 24 24" fill="none" stroke="#EE8A35" stroke-width="2" stroke-linecap="round" stroke-linejoin="round"><rect x="2" y="2" width="20" height="20" rx="2.18" ry="2.18"/><line x1="7" y1="2" x2="7" y2="22"/><line x1="17" y1="2" x2="17" y2="22"/><line x1="2" y1="12" x2="22" y2="12"/><line x1="2" y1="7" x2="7" y2="7"/><line x1="2" y1="17" x2="7" y2="17"/><line x1="17" y1="17" x2="22" y2="17"/><line x1="17" y1="7" x2="22" y2="7"/></svg>
<div id="T78" class="t" style="left:1016px;transform-origin:0 0;top:805.15px;font-size:14px;line-height:14px;color:#3A3A3A;font-weight:400;transform:scaleX(1.1823);">Video file name</div>
<div id="T79" class="t" style="left:1016px;transform-origin:0 0;top:825.84px;font-size:12px;line-height:12px;color:#A8A8A8;font-weight:400;transform:scaleX(1.1539);">.mp4 / 2.23 Gb</div>
<div id="T80" class="t" style="right:64px;transform-origin:100% 0;top:813.84px;font-size:12px;line-height:12px;color:#B2B2B2;font-weight:400;transform:scaleX(1.0798);">Apr 5, 2016</div>
<div style="position:absolute;left:960px;top:864px;width:432px;height:72px;box-sizing:border-box;background:#fff;border-radius:1px"></div>
<svg style="position:absolute;left:976px;top:888px" width="24" height="24" viewBox="0 0 24 24" fill="none" stroke="#9556D6" stroke-width="2" stroke-linecap="round" stroke-linejoin="round"><circle cx="12" cy="12" r="10"/><line x1="2" y1="12" x2="22" y2="12"/><path d="M12 2a15.3 15.3 0 0 1 4 10 15.3 15.3 0 0 1-4 10 15.3 15.3 0 0 1-4-10 15.3 15.3 0 0 1 4-10z"/></svg>
<div id="T81" class="t" style="left:1016px;transform-origin:0 0;top:885.15px;font-size:14px;line-height:14px;color:#3A3A3A;font-weight:400;transform:scaleX(1.1664);">Web page name</div>
<div id="T82" class="t" style="left:1016px;transform-origin:0 0;top:905.84px;font-size:12px;line-height:12px;color:#A8A8A8;font-weight:400;transform:scaleX(1.1807);">.html / 745.2 Kb</div>
<div id="T83" class="t" style="right:64px;transform-origin:100% 0;top:893.84px;font-size:12px;line-height:12px;color:#B2B2B2;font-weight:400;transform:scaleX(1.0798);">Sep 3, 2017</div>
<div style="position:absolute;left:960px;top:944px;width:432px;height:72px;box-sizing:border-box;background:#fff;border-radius:1px"></div>
<svg style="position:absolute;left:976px;top:968px" width="24" height="24" viewBox="0 0 24 24" fill="none" stroke="#5DC38A" stroke-width="2" stroke-linecap="round" stroke-linejoin="round"><path d="M9 18V5l12-2v13"/><circle cx="6" cy="18" r="3"/><circle cx="18" cy="16" r="3"/></svg>
<div id="T84" class="t" style="left:1016px;transform-origin:0 0;top:965.15px;font-size:14px;line-height:14px;color:#3A3A3A;font-weight:400;transform:scaleX(1.1875);">Audio file name</div>
<div id="T85" class="t" style="left:1016px;transform-origin:0 0;top:985.84px;font-size:12px;line-height:12px;color:#A8A8A8;font-weight:400;transform:scaleX(1.1530);">.mp3 / 7.3 Mb</div>
<div id="T86" class="t" style="right:64px;transform-origin:100% 0;top:973.84px;font-size:12px;line-height:12px;color:#B2B2B2;font-weight:400;transform:scaleX(1.0798);">Aug 7, 2017</div>
<div style="position:absolute;left:1344px;top:928px;width:64px;height:64px;box-sizing:border-box;background:#0077FF;border-radius:50%"></div>
<svg style="position:absolute;left:1364px;top:948px" width="24" height="24" viewBox="0 0 24 24" fill="none" stroke="#fff" stroke-width="2" stroke-linecap="round" stroke-linejoin="round"><line x1="12" y1="5" x2="12" y2="19"/><line x1="5" y1="12" x2="19" y2="12"/></svg>
</body></html>
